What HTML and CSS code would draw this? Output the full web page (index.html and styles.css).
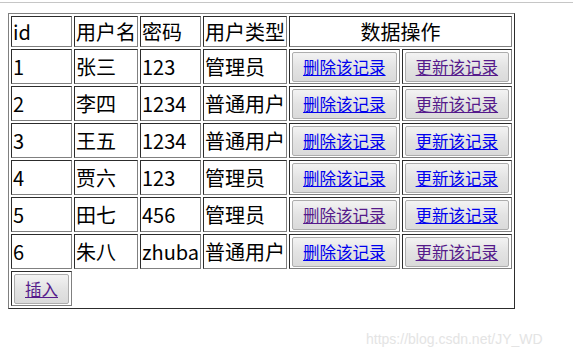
FILE: index.html
```html
<!DOCTYPE html>
<html>
<head>
    <meta charset="utf-8">
    <title>用户列表</title>
    <link rel="stylesheet" href="styles.css">
</head>
<body>
    <div class="topline"></div>

    <table class="users">
        <tr>
            <td>id</td>
            <td>用户名</td>
            <td>密码</td>
            <td>用户类型</td>
            <th colspan="2">数据操作</th>
        </tr>
        <tr>
            <td>1</td><td>张三</td><td>123</td><td>管理员</td>
            <td><button class="btn"><a href="#del1">删除该记录</a></button></td>
            <td><button class="btn"><a href="#upd1" class="seen">更新该记录</a></button></td>
        </tr>
        <tr>
            <td>2</td><td>李四</td><td>1234</td><td>普通用户</td>
            <td><button class="btn"><a href="#del2">删除该记录</a></button></td>
            <td><button class="btn"><a href="#upd2" class="seen">更新该记录</a></button></td>
        </tr>
        <tr>
            <td>3</td><td>王五</td><td>1234</td><td>普通用户</td>
            <td><button class="btn"><a href="#del3">删除该记录</a></button></td>
            <td><button class="btn"><a href="#upd3">更新该记录</a></button></td>
        </tr>
        <tr>
            <td>4</td><td>贾六</td><td>123</td><td>管理员</td>
            <td><button class="btn"><a href="#del4">删除该记录</a></button></td>
            <td><button class="btn"><a href="#upd4">更新该记录</a></button></td>
        </tr>
        <tr>
            <td>5</td><td>田七</td><td>456</td><td>管理员</td>
            <td><button class="btn"><a href="#del5" class="seen">删除该记录</a></button></td>
            <td><button class="btn"><a href="#upd5">更新该记录</a></button></td>
        </tr>
        <tr>
            <td>6</td><td>朱八</td><td>zhuba</td><td>普通用户</td>
            <td><button class="btn"><a href="#del6">删除该记录</a></button></td>
            <td><button class="btn"><a href="#upd6" class="seen">更新该记录</a></button></td>
        </tr>
        <tr>
            <td><button class="btn"><a href="#add" class="seen">插入</a></button></td>
        </tr>
    </table>

    <div class="mark">https://blog.csdn.net/JY_WD</div>
</body>
</html>
```

FILE: styles.css
```css
body { margin: 0; background: #fff; color: #000; font-family: "Noto Sans CJK SC", sans-serif; }
.topline { margin-top: 2px; border-top: 1px solid #c6c6c6; }

.users { margin: 10px 0 0 8px; border: 1px outset #808080; border-spacing: 2px; }
.users td, .users th { border: 1px inset #808080; padding: 1px; font-size: 20px; line-height: 27px; text-align: left; font-weight: normal; white-space: nowrap; }
.users th { text-align: center; }

.btn { display: block; height: 30px; margin: 1px 1px 0 1px; padding: 0 10px; border: 1px solid #adadad; border-radius: 2px; background: linear-gradient(#f3f3f3, #e3e3e3 50%, #dadada); font-family: "Noto Sans CJK SC", sans-serif; font-size: 16.5px; line-height: 28px; cursor: pointer; }
.btn a { color: #0000ee; text-decoration: underline; }
.btn a.seen { color: #551a8b; }

.mark { position: absolute; left: 366px; top: 331px; font-family: "Liberation Sans", sans-serif; font-size: 14px; color: #e4e4e4; }
```
